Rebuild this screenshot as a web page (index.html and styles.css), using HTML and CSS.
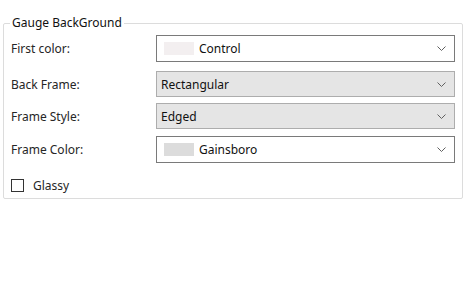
FILE: index.html
```html
<!DOCTYPE html>
<html lang="en">
<head>
  <meta charset="UTF-8">
  <title>Gauge BackGround</title>
  <link rel="stylesheet" href="styles.css">
</head>
<body>

  <fieldset class="grupo">
    <legend>Gauge BackGround</legend>

    <div class="linha l1">
      <label>First color:</label>
      <div class="combo branco">
        <span class="amostra" style="background:#f3eff0"></span>
        <span class="texto">Control</span>
        <svg class="seta" width="9" height="5" viewBox="0 0 9 5"><path d="M0.5 0.5 L4.5 4.5 L8.5 0.5" fill="none" stroke="#606060" stroke-width="1"/></svg>
      </div>
    </div>

    <div class="linha l2">
      <label>Back Frame:</label>
      <div class="combo cinza">
        <span class="texto">Rectangular</span>
        <svg class="seta" width="9" height="5" viewBox="0 0 9 5"><path d="M0.5 0.5 L4.5 4.5 L8.5 0.5" fill="none" stroke="#606060" stroke-width="1"/></svg>
      </div>
    </div>

    <div class="linha l3">
      <label>Frame Style:</label>
      <div class="combo cinza">
        <span class="texto">Edged</span>
        <svg class="seta" width="9" height="5" viewBox="0 0 9 5"><path d="M0.5 0.5 L4.5 4.5 L8.5 0.5" fill="none" stroke="#606060" stroke-width="1"/></svg>
      </div>
    </div>

    <div class="linha l4">
      <label>Frame Color:</label>
      <div class="combo branco">
        <span class="amostra" style="background:#dcdcdc"></span>
        <span class="texto">Gainsboro</span>
        <svg class="seta" width="9" height="5" viewBox="0 0 9 5"><path d="M0.5 0.5 L4.5 4.5 L8.5 0.5" fill="none" stroke="#606060" stroke-width="1"/></svg>
      </div>
    </div>

    <div class="check">
      <span class="caixa"></span>
      <span>Glassy</span>
    </div>
  </fieldset>

</body>
</html>
```

FILE: styles.css
```css
* { margin: 0; padding: 0; box-sizing: border-box; }
body { font-family: 'Segoe UI', 'Noto Sans', sans-serif; font-size: 12px; color: #1a1a1a; background: #fff; }
.grupo { margin: 15px 2px 0 3px; height: 184px; border: 1px solid #dcdcdc; border-radius: 2px; padding: 0; }
.grupo legend { margin-left: 6px; padding: 0 2px; line-height: 16px; color: #111; }
.linha { display: flex; align-items: center; height: 27px; padding-left: 7px; }
.linha label { width: 145px; color: #262626; }
.l1 { margin-top: 4px; }
.l2 { margin-top: 9px; height: 26px; }
.l3 { margin-top: 6px; height: 26px; }
.l4 { margin-top: 7px; }
.combo { width: 299px; height: 100%; display: flex; align-items: center; padding-left: 4px; }
.combo.branco { background: #fff; border: 1px solid #7a7a7a; padding-left: 7px; }
.combo.cinza { background: #e5e5e5; border: 1px solid #adadad; }
.amostra { width: 30px; height: 13px; margin-right: 5px; }
.texto { flex: 1; color: #111; }
.seta { margin-right: 8px; }
.check { display: flex; align-items: center; gap: 9px; margin-top: 14px; padding-left: 7px; color: #262626; }
.caixa { width: 13px; height: 13px; border: 1px solid #333; background: #fff; }
```
